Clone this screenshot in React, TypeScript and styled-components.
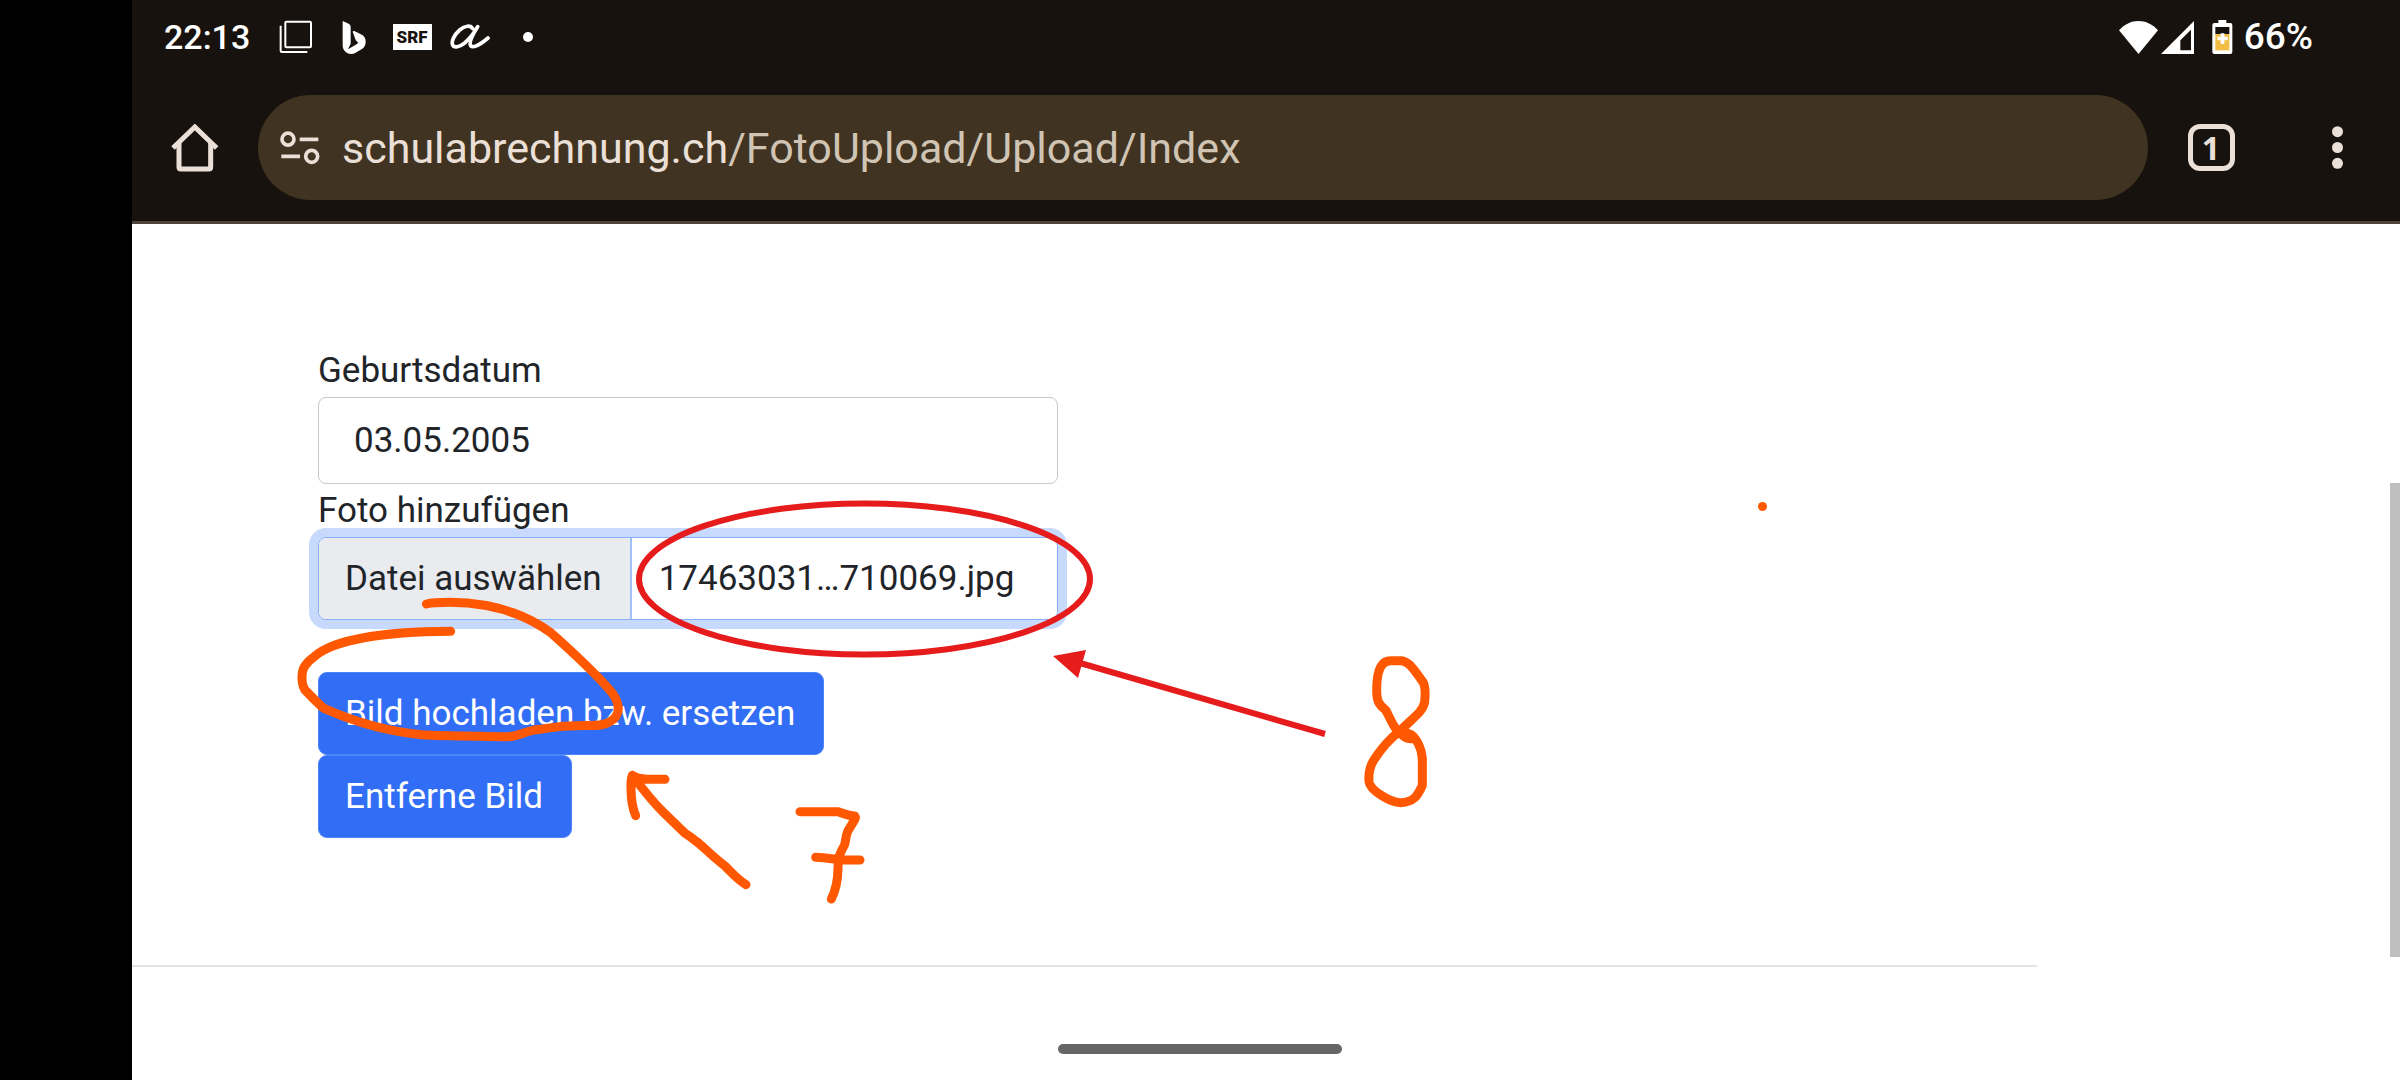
import React, { useState } from "react";
import styled, { createGlobalStyle } from "styled-components";

const GlobalStyle = createGlobalStyle`
  *, *::before, *::after { box-sizing: border-box; }
  body {
    margin: 0;
    background: #fff;
    color: #212529;
    font-family: Roboto, "Noto Sans", sans-serif;
    font-size: 35px;
    line-height: 53px;
  }
`;

const Device = styled.div`
  display: flex;
  min-height: 100vh;
  background: #000;
`;

const Screen = styled.div`
  flex: 1;
  min-width: 0;
  display: flex;
  flex-direction: column;
  margin-left: 132px;
  background: #fff;
`;

const BrowserChrome = styled.header`
  background: #17120d;
  border-bottom: 3px solid #50443a;
  color: #ebe0d7;
`;

const StatusBar = styled.div`
  display: flex;
  align-items: center;
  justify-content: space-between;
  height: 74px;
  padding: 0 87px 0 32px;
  color: #fff;
`;

const StatusGroup = styled.div`
  display: flex;
  align-items: center;
`;

const Clock = styled.span`
  min-width: 103px;
  font-size: 34px;
  font-weight: 500;
  line-height: 74px;
`;

const BatteryLevel = styled.span`
  font-size: 37px;
  font-weight: 500;
  line-height: 74px;
`;

const NoticeCell = styled.span`
  display: flex;
  align-items: center;
  justify-content: center;
  width: 58px;
`;

const SrfBadge = styled.span`
  display: flex;
  align-items: center;
  justify-content: center;
  width: 39px;
  height: 26px;
  background: #fff;
  color: #17120d;
  font-size: 17px;
  font-weight: 900;
  line-height: 26px;
`;

const StatusIcons = styled.span`
  display: flex;
  align-items: center;
  gap: 3px;
  margin-right: 18px;
`;

const BatteryIcon = styled.svg`
  display: block;
  margin-right: 11px;
`;

const Toolbar = styled.div`
  display: flex;
  align-items: center;
  height: 147px;
`;

const ToolButton = styled.button`
  display: flex;
  align-items: center;
  justify-content: center;
  width: 126px;
  height: 105px;
  padding: 0;
  border: 0;
  background: none;
  color: inherit;
  font: inherit;
`;

const TabCount = styled.span`
  display: flex;
  align-items: center;
  justify-content: center;
  width: 47px;
  height: 47px;
  border: 5px solid currentColor;
  border-radius: 12px;
  font-family: "Noto Sans", sans-serif;
  font-size: 32px;
  font-weight: 700;
  line-height: 37px;
`;

const Omnibox = styled.div`
  flex: 1;
  min-width: 0;
  display: flex;
  align-items: center;
  gap: 22px;
  height: 105px;
  padding: 0 22px;
  border-radius: 53px;
  background: #413321;
`;

const Address = styled.a`
  color: #d0c4b4;
  font-size: 43px;
  line-height: 52px;
  text-decoration: none;
  white-space: nowrap;
`;

const Host = styled.span`
  color: #ebe0d7;
`;

const Page = styled.main`
  position: relative;
  flex: 1;
  padding-top: 120px;
`;

const UploadForm = styled.form`
  display: flex;
  flex-direction: column;
  align-items: flex-start;
  width: 740px;
  margin-left: 186px;
`;

const FieldLabel = styled.label`
  position: relative;
  z-index: 1;
  display: block;
`;

const TextInput = styled.input`
  width: 100%;
  height: 87px;
  padding: 0 35px;
  border: 1px solid #c3cad1;
  border-radius: 8px;
  background: #fff;
  color: inherit;
  font: inherit;
`;

const FilePicker = styled.div`
  position: relative;
  display: flex;
  width: 100%;
  height: 83px;
  margin-bottom: 52px;
  border: 1px solid #86b0fb;
  border-radius: 8px;
  background: #fff;
  box-shadow: 0 0 0 9px #c7d9fc;
  line-height: 81px;
`;

const FileInput = styled.input`
  position: absolute;
  inset: 0;
  width: 100%;
  height: 100%;
  opacity: 0;
`;

const FileButton = styled.span`
  padding: 0 28px 0 26px;
  border-right: 2px solid #a1c0f8;
  border-radius: 7px 0 0 7px;
  background: #eaebef;
`;

const FileName = styled.span`
  padding-left: 27px;
`;

const PrimaryButton = styled.button`
  height: 83px;
  padding: 0 28px 0 26px;
  border: 1px solid #4c84f8;
  border-radius: 9px;
  background: #316df5;
  color: #fff;
  font: inherit;
`;

const Divider = styled.hr`
  width: 84%;
  height: 2px;
  margin: 127px 0 0;
  border: 0;
  background: #e3e4e7;
`;

const ScrollThumb = styled.div`
  position: absolute;
  top: 259px;
  right: 0;
  width: 10px;
  height: 474px;
  background: #bfbfbf;
`;

const GestureBar = styled.div`
  position: fixed;
  bottom: 26px;
  left: 50%;
  width: 284px;
  height: 10px;
  margin-left: -142px;
  border-radius: 5px;
  background: #666;
`;

const Markup = styled.svg`
  position: absolute;
  z-index: 2;
  top: 0;
  left: 0;
  pointer-events: none;

  path {
    vector-effect: non-scaling-stroke;
  }
`;

function GalleryIcon() {
  return (
    <svg width="34" height="34" viewBox="478 60 102 102" fill="none" stroke="#fff" strokeWidth="6">
      <rect x="497" y="65" width="77" height="77" rx="3" />
      <path d="M483 77V152Q483 156 487 156H563" />
    </svg>
  );
}

function BingIcon() {
  return (
    <svg width="26" height="36" viewBox="664 56 78 108" fill="#fff">
      <path d="M669 62L687 70Q693 73 693 80V130L685 147L707 134L716 128L708 119L699 94Q700 91 704 92L728 104Q738 110 738 124Q738 138 728 145L708 157Q695 165 681 157Q669 150 669 135Z" />
    </svg>
  );
}

function ScriptAIcon() {
  return (
    <svg width="40" height="28" viewBox="988 70 120 84" fill="none" stroke="#fff" strokeWidth="11" strokeLinecap="round" strokeLinejoin="round">
      <path d="M1056 87C1050 76 1033 77 1017 91C1001 105 991 125 996 136C1000 146 1017 142 1032 130C1047 117 1061 98 1071 81C1057 103 1046 127 1049 136C1053 147 1073 140 1102 115" />
    </svg>
  );
}

function DotIcon() {
  return (
    <svg width="10" height="10" viewBox="0 0 10 10" fill="#fff">
      <circle cx="5" cy="5" r="5" />
    </svg>
  );
}

function WifiIcon() {
  return (
    <svg width="39" height="33" viewBox="111 60 117 99" fill="#fff">
      <path d="M169.500 159L111 88C127 70 148 60 169.500 60C191 60 212 70 228 88Z" />
    </svg>
  );
}

function SignalIcon() {
  return (
    <svg width="33" height="33" viewBox="237 60 99 99" fill="#fff" fillRule="evenodd">
      <path d="M336 60V159H237ZM327 86L295 118V148H327Z" />
    </svg>
  );
}

function ChargingIcon() {
  return (
    <BatteryIcon width="21" height="34" viewBox="392 57 63 102">
      <path d="M411 57H435V66H447Q453 66 453 72V153Q453 159 447 159H399Q393 159 393 153V72Q393 66 399 66H411Z" fill="#fff" />
      <path d="M402 78H444V99H402Z" fill="#17120d" />
      <path d="M402 99H444V148H402Z" fill="#f2bd42" />
      <path d="M418 97H429V107H439V118H429V129H418V118H408V107H418Z" fill="#fff" />
    </BatteryIcon>
  );
}

function HomeIcon() {
  return (
    <svg width="48" height="48" viewBox="155 371 144 144" fill="none" stroke="currentColor" strokeWidth="15">
      <path d="M179 425V500Q179 506 185 506H268Q274 506 274 500V425" />
      <path d="M161 443L226.500 380L292 443" strokeLinejoin="miter" />
    </svg>
  );
}

function SiteSettingsIcon() {
  return (
    <svg width="40" height="34" viewBox="479 392 120 102" fill="none" stroke="#ebe0d7" strokeWidth="11">
      <circle cx="503" cy="416.500" r="18" />
      <path d="M538 417H594M483 468H539" />
      <circle cx="574" cy="468" r="18" />
    </svg>
  );
}

function MenuIcon() {
  return (
    <svg width="11" height="43" viewBox="756 378 33 129" fill="currentColor">
      <circle cx="772.500" cy="395" r="16.500" />
      <circle cx="772.500" cy="442.500" r="16.500" />
      <circle cx="772.500" cy="490" r="16.500" />
    </svg>
  );
}

function HandDrawnNotes() {
  return (
    <Markup width="1700" height="720" viewBox="132 224 1700 720" fill="none" aria-hidden="true">
      <g stroke="#e61b1b" strokeWidth="6">
        <ellipse cx="864.5" cy="579" rx="225.5" ry="75.500" />
        <path d="M1080 663L1325 734" />
      </g>
      <path d="M1053 656L1086 650L1078 678Z" fill="#e61b1b" />
      <g stroke="#ff5800" strokeWidth="9" strokeLinecap="round" strokeLinejoin="round">
        <path
          transform="translate(290 590) scale(0.35714 0.33333)"
          d="M382 42C400 37 420 37 447 37C560 38 650 65 730 128C790 185 850 245 897 302C925 338 925 370 905 388C880 410 860 406 800 407C760 407 740 412 690 419C640 429 640 440 610 440C520 438 430 438 370 434C285 426 190 400 95 355C80 343 65 325 42 300C30 280 32 245 40 230Q52 211 68 200C120 150 260 125 450 124"
        />
        <path
          transform="translate(600 740) scale(0.33333)"
          d="M438 434C412 418 400 403 375 378C330 343 310 320 290 305Q275 293 255 280L190 217C155 182 130 150 97 106M195 118H140C120 116 105 112 97 106C92 115 93 125 93 145Q93 195 107 227"
        />
        <path
          transform="translate(600 740) scale(0.33333)"
          d="M600 215H715C735 222 745 228 764 228Q768 232 764 239L743 274C735 295 738 305 733 316C718 343 715 350 714 385Q713 440 694 477M647 352C690 353 700 359 740 360H780"
        />
        <path
          transform="translate(1040 630) scale(0.33333)"
          d="M1115 326C1096 328 1088 316 1070 300C1055 280 1048 260 1037 240C1015 223 1010 212 1010 180C1010 130 1020 92 1052 92H1085C1105 94 1120 115 1150 158Q1158 175 1154 215C1150 245 1120 262 1078 305C1050 325 1020 362 1000 392C984 420 986 440 987 455C990 480 1050 518 1082 518C1120 516 1132 500 1147 466V385C1145 355 1130 327 1115 315L1085 303"
        />
      </g>
      <circle cx="1762.500" cy="506.500" r="4.500" fill="#ff5800" />
    </Markup>
  );
}

export default function App() {
  const [birthDate, setBirthDate] = useState("03.05.2005");
  const [fileName, setFileName] = useState("17463031…710069.jpg");

  return (
    <Device>
      <GlobalStyle />
      <Screen>
        <BrowserChrome>
          <StatusBar>
            <StatusGroup>
              <Clock>22:13</Clock>
              <NoticeCell><GalleryIcon /></NoticeCell>
              <NoticeCell><BingIcon /></NoticeCell>
              <NoticeCell><SrfBadge>SRF</SrfBadge></NoticeCell>
              <NoticeCell><ScriptAIcon /></NoticeCell>
              <NoticeCell><DotIcon /></NoticeCell>
            </StatusGroup>
            <StatusGroup>
              <StatusIcons>
                <WifiIcon />
                <SignalIcon />
              </StatusIcons>
              <ChargingIcon />
              <BatteryLevel>66%</BatteryLevel>
            </StatusGroup>
          </StatusBar>
          <Toolbar>
            <ToolButton type="button" aria-label="Startseite"><HomeIcon /></ToolButton>
            <Omnibox>
              <SiteSettingsIcon />
              <Address href="#">
                <Host>schulabrechnung.ch</Host>/FotoUpload/Upload/Index
              </Address>
            </Omnibox>
            <ToolButton type="button" aria-label="Tabs"><TabCount>1</TabCount></ToolButton>
            <ToolButton type="button" aria-label="Menü"><MenuIcon /></ToolButton>
          </Toolbar>
        </BrowserChrome>

        <Page>
          <UploadForm onSubmit={(event) => event.preventDefault()}>
            <FieldLabel htmlFor="birth-date">Geburtsdatum</FieldLabel>
            <TextInput
              id="birth-date"
              type="text"
              value={birthDate}
              onChange={(event) => setBirthDate(event.target.value)}
            />
            <FieldLabel htmlFor="photo">Foto hinzufügen</FieldLabel>
            <FilePicker>
              <FileButton>Datei auswählen</FileButton>
              <FileName>{fileName}</FileName>
              <FileInput
                id="photo"
                type="file"
                accept="image/*"
                onChange={(event) => setFileName(event.target.files?.[0]?.name ?? "")}
              />
            </FilePicker>
            <PrimaryButton type="submit">Bild hochladen bzw. ersetzen</PrimaryButton>
            <PrimaryButton type="button">Entferne Bild</PrimaryButton>
          </UploadForm>
          <Divider />
          <ScrollThumb />
          <HandDrawnNotes />
        </Page>
      </Screen>
      <GestureBar />
    </Device>
  );
}
